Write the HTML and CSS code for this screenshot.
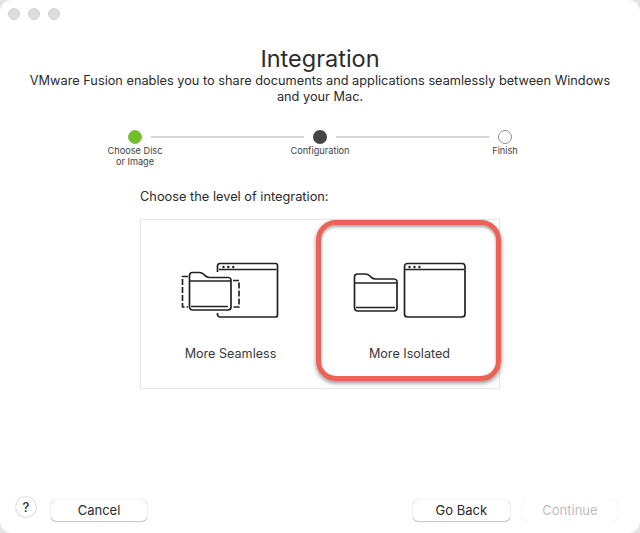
FILE: index.html
```html
<!DOCTYPE html>
<html lang="en">

<head>
    <meta charset="UTF-8">
    <title>Integration</title>
    <link rel="stylesheet" href="styles.css">
</head>

<body>
    <div class="window">
        <div class="titlebar">
            <span class="light"></span>
            <span class="light"></span>
            <span class="light"></span>
        </div>

        <h1 class="title">Integration</h1>
        <p class="intro">VMware Fusion enables you to share documents and applications seamlessly between Windows and your Mac.</p>

        <div class="steps">
            <div class="step">
                <span class="dot dot-done"></span>
                <span class="step-label">Choose Disc<br>or Image</span>
            </div>
            <span class="step-line"></span>
            <div class="step">
                <span class="dot dot-current"></span>
                <span class="step-label">Configuration</span>
            </div>
            <span class="step-line"></span>
            <div class="step">
                <span class="dot dot-todo"></span>
                <span class="step-label">Finish</span>
            </div>
        </div>

        <div class="chooser">
            <p class="chooser-label">Choose the level of integration:</p>
            <div class="options">
                <div class="option">
                    <svg class="option-icon" width="100" height="60" viewBox="0 0 100 60" fill="none" stroke="#222" stroke-width="1.7">
                        <path d="M36.500 12V6a2.500 2.500 0 0 1 2.500-2.500H94.500a2 2 0 0 1 2 2V55a2 2 0 0 1-2 2H39a2.500 2.500 0 0 1-2.500-2.500V53"/>
                        <path d="M38 9.500H95.500"/>
                        <path d="M7 16.500H1.500V47H7M52 20.500H58V47H52" stroke-dasharray="6 2"/>
                        <path d="M8.500 15.500a3 3 0 0 1 3-3H18q3 0 5 2l1.500 1.500q2 1.500 4 1.500H47a3 3 0 0 1 3 2V47a3 3 0 0 1-3 3H11.500a3 3 0 0 1-3-3Z" fill="#fff"/>
                        <path d="M8.500 21H50M10 46.500H47"/>
                        <g fill="#222" stroke="none">
                            <circle cx="42.500" cy="7" r="1.200"/>
                            <circle cx="47.300" cy="7" r="1.200"/>
                            <circle cx="52.300" cy="7" r="1.200"/>
                        </g>
                    </svg>
                    <span class="option-label">More Seamless</span>
                </div>
                <div class="option">
                    <svg class="option-icon" width="115" height="60" viewBox="0 0 115 60" fill="none" stroke="#222" stroke-width="1.7">
                        <path d="M2.500 17a3 3 0 0 1 3-3H13q3 0 5 2l1.500 1.500q2 1.500 4 1.500H42a3 3 0 0 1 3 2V48a3 3 0 0 1-3 3H5.500a3 3 0 0 1-3-3Z"/>
                        <path d="M2.500 23H45M4 47.500H43"/>
                        <rect x="52.500" y="3.500" width="60.500" height="53.500" rx="3"/>
                        <path d="M53 9.500H112"/>
                        <g fill="#222" stroke="none">
                            <circle cx="57.500" cy="7" r="1.200"/>
                            <circle cx="62.500" cy="7" r="1.200"/>
                            <circle cx="67.500" cy="7" r="1.200"/>
                        </g>
                    </svg>
                    <span class="option-label">More Isolated</span>
                </div>
                <div class="highlight"></div>
            </div>
        </div>

        <div class="footer">
            <span class="help">?</span>
            <button class="btn">Cancel</button>
            <span class="footer-gap"></span>
            <button class="btn">Go Back</button>
            <button class="btn btn-disabled">Continue</button>
        </div>
    </div>
</body>

</html>
```

FILE: styles.css
```css
html,
body {
    margin: 0;
    padding: 0;
    height: 100%;
    background-color: #e4e4e4;
}

body {
    font-family: Inter, "Liberation Sans", sans-serif;
    color: #2b2b2b;
    overflow: hidden;
}

.window {
    display: flex;
    flex-direction: column;
    height: 533px;
    box-sizing: border-box;
    background-color: #fff;
    border-radius: 12px;
}

.titlebar {
    display: flex;
    gap: 8px;
    padding: 8px 8px 0;
}

.light {
    width: 12px;
    height: 12px;
    box-sizing: border-box;
    border-radius: 50%;
    background-color: #dcdcdc;
    border: 1px solid #d2d2d2;
}

.title {
    margin: 24px 0 0;
    font-size: 23.500px;
    line-height: 30px;
    font-weight: 400;
    text-align: center;
}

.intro {
    margin: -1px auto 0;
    width: 600px;
    font-size: 12.750px;
    line-height: 16px;
    text-align: center;
}

.steps {
    display: flex;
    align-items: flex-start;
    margin: 25px 0 0 95px;
    width: 450px;
}

.step {
    display: flex;
    flex-direction: column;
    align-items: center;
    flex: none;
    width: 80px;
}

.dot {
    width: 14px;
    height: 14px;
    box-sizing: border-box;
    border-radius: 50%;
}

.dot-done {
    background-color: #6fc024;
    border: 1px solid #8ab85c;
}

.dot-current {
    background-color: #464646;
}

.dot-todo {
    border: 1px solid #8e8e8e;
}

.step-line {
    flex: 1;
    height: 2px;
    margin: 6px -24px 0;
    background-color: #d6d6d6;
}

.step-label {
    margin-top: 1px;
    font-size: 9.200px;
    line-height: 11px;
    text-align: center;
    color: #444;
}

.chooser {
    margin: 22px 0 0 140px;
    width: 360px;
}

.chooser-label {
    margin: 0 0 14px;
    font-size: 12.800px;
    line-height: 16px;
}

.options {
    position: relative;
    display: grid;
    grid-template-columns: 1fr 1fr;
    height: 170px;
    box-sizing: border-box;
    border: 1px solid #e6e6e6;
}

.option {
    display: flex;
    flex-direction: column;
    align-items: center;
    padding-top: 40px;
}

.option-icon {
    display: block;
}

.option-label {
    margin-top: 26px;
    font-size: 12.600px;
    line-height: 16px;
    color: #3a3a3a;
}

.highlight {
    position: absolute;
    left: 175px;
    top: 0;
    width: 185px;
    height: 161px;
    box-sizing: border-box;
    border: 5px solid #ee6156;
    border-radius: 20px;
    box-shadow: 0 2px 4px rgba(0, 0, 0, 0.45), inset 0 2px 3px rgba(0, 0, 0, 0.35);
}

.footer {
    display: flex;
    align-items: center;
    margin-top: auto;
    padding: 0 21.700px 12px 16px;
    gap: 12px;
}

.help {
    width: 20px;
    height: 20px;
    margin: -7px 2.700px 0 0;
    border-radius: 50%;
    background-color: #fff;
    box-shadow: 0 0 2px rgba(0, 0, 0, 0.4);
    font-size: 13px;
    font-weight: 500;
    line-height: 20px;
    text-align: center;
}

.footer-gap {
    flex: 1;
}

.btn {
    width: 96.700px;
    height: 21px;
    padding: 0 0 1px;
    border: none;
    border-radius: 5px;
    background-color: #fff;
    box-shadow: 0 0 1px rgba(0, 0, 0, 0.45), 0 1px 1px rgba(0, 0, 0, 0.2);
    font-family: inherit;
    font-size: 13px;
    color: #2b2b2b;
}

.btn-disabled {
    color: #bdbdbd;
    box-shadow: 0 0 1px rgba(0, 0, 0, 0.18);
}
```
